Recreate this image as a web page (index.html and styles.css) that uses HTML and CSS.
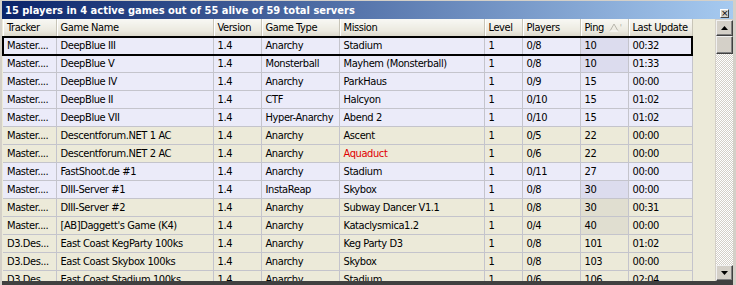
FILE: index.html
```html
<!DOCTYPE html>
<html>
<head>
<meta charset="utf-8">
<link rel="stylesheet" href="styles.css">
</head>
<body>
<div class="window">
  <div class="titlebar">
    <span class="title">15 players in 4 active games out of 55 alive of 59 total servers</span>
    <span class="close">×</span>
  </div>
  <div class="content">
    <div class="list">
      <table class="grid">
        <colgroup>
          <col class="c-tracker"><col class="c-name"><col class="c-version"><col class="c-type"><col class="c-mission"><col class="c-level"><col class="c-players"><col class="c-ping"><col class="c-update">
        </colgroup>
        <thead>
          <tr>
            <th>Tracker</th><th>Game Name</th><th>Version</th><th>Game Type</th><th>Mission</th><th>Level</th><th>Players</th>
            <th>Ping <svg class="sort" width="11" height="9" viewBox="0 0 11 9"><path d="M1 8 L5 1 L9 8" fill="none" stroke="#b8b6ac" stroke-width="1"/><path d="M1 8 H9" stroke="#ffffff" stroke-width="1"/></svg><span class="dot">'</span></th>
            <th>Last Update</th>
          </tr>
        </thead>
        <tbody>
          <tr class="blue selected"><td>Master....</td><td>DeepBlue III</td><td>1.4</td><td>Anarchy</td><td>Stadium</td><td>1</td><td>0/8</td><td class="hl">10</td><td>00:32</td></tr>
          <tr class="blue"><td>Master....</td><td>DeepBlue V</td><td>1.4</td><td>Monsterball</td><td>Mayhem (Monsterball)</td><td>1</td><td>0/8</td><td class="hl">10</td><td>01:33</td></tr>
          <tr class="blue"><td>Master....</td><td>DeepBlue IV</td><td>1.4</td><td>Anarchy</td><td>ParkHaus</td><td>1</td><td>0/9</td><td>15</td><td>00:00</td></tr>
          <tr class="blue"><td>Master....</td><td>DeepBlue II</td><td>1.4</td><td>CTF</td><td>Halcyon</td><td>1</td><td>0/10</td><td>15</td><td>01:02</td></tr>
          <tr class="blue"><td>Master....</td><td>DeepBlue VII</td><td>1.4</td><td>Hyper-Anarchy</td><td>Abend 2</td><td>1</td><td>0/10</td><td>15</td><td>01:02</td></tr>
          <tr class="tan"><td>Master....</td><td>Descentforum.NET 1 AC</td><td>1.4</td><td>Anarchy</td><td>Ascent</td><td>1</td><td>0/5</td><td>22</td><td>00:00</td></tr>
          <tr class="tan"><td>Master....</td><td>Descentforum.NET 2 AC</td><td>1.4</td><td>Anarchy</td><td class="red">Aquaduct</td><td>1</td><td>0/6</td><td>22</td><td>00:00</td></tr>
          <tr class="blue"><td>Master....</td><td>FastShoot.de #1</td><td>1.4</td><td>Anarchy</td><td>Stadium</td><td>1</td><td>0/11</td><td>27</td><td>00:00</td></tr>
          <tr class="blue"><td>Master....</td><td>DIII-Server #1</td><td>1.4</td><td>InstaReap</td><td>Skybox</td><td>1</td><td>0/8</td><td class="hl">30</td><td>00:00</td></tr>
          <tr class="tan"><td>Master....</td><td>DIII-Server #2</td><td>1.4</td><td>Anarchy</td><td>Subway Dancer V1.1</td><td>1</td><td>0/8</td><td class="hl">30</td><td>00:31</td></tr>
          <tr class="tan"><td>Master....</td><td>[AB]Daggett's Game (K4)</td><td>1.4</td><td>Anarchy</td><td>Kataclysmica1.2</td><td>1</td><td>0/4</td><td class="hl">40</td><td>00:00</td></tr>
          <tr class="tan"><td>D3.Des...</td><td>East Coast KegParty 100ks</td><td>1.4</td><td>Anarchy</td><td>Keg Party D3</td><td>1</td><td>0/8</td><td>101</td><td>01:02</td></tr>
          <tr class="tan"><td>D3.Des...</td><td>East Coast Skybox 100ks</td><td>1.4</td><td>Anarchy</td><td>Skybox</td><td>1</td><td>0/8</td><td>103</td><td>00:00</td></tr>
          <tr class="tan"><td>D3.Des...</td><td>East Coast Stadium 100ks</td><td>1.4</td><td>Anarchy</td><td>Stadium</td><td>1</td><td>0/6</td><td>106</td><td>02:04</td></tr>
        </tbody>
      </table>
    </div>
    <div class="scrollbar">
      <div class="sbtn"><svg width="7" height="4" viewBox="0 0 7 4"><path d="M3.5 0 L7 4 H0 Z" fill="#000"/></svg></div>
      <div class="thumb"></div>
      <div class="track"></div>
      <div class="sbtn"><svg width="7" height="4" viewBox="0 0 7 4"><path d="M0 0 H7 L3.5 4 Z" fill="#000"/></svg></div>
    </div>
  </div>
</div>
</body>
</html>
```

FILE: styles.css
```css
html, body {
  margin: 0;
  padding: 0;
  background: #d4d0c8;
}
.window {
  width: 736px;
  height: 285px;
  box-sizing: border-box;
  padding: 1px 3px 0 2px;
  display: flex;
  flex-direction: column;
  background: #d4d0c8;
  overflow: hidden;
}
.titlebar {
  height: 18px;
  flex: none;
  display: flex;
  align-items: center;
  justify-content: space-between;
  padding: 0 0 0 3px;
  background: linear-gradient(to right, #0a246a, #a6caf0);
}
.title {
  color: #fff;
  font-family: "DejaVu Sans Condensed", "DejaVu Sans", sans-serif;
  font-stretch: condensed;
  font-weight: bold;
  font-size: 11px;
}
.close {
  width: 9px;
  height: 9px;
  margin: 6px 4px 0 0;
  box-sizing: border-box;
  border: 1px solid;
  border-color: #fff #404040 #404040 #fff;
  background: #d4d0c8;
  font-family: "DejaVu Sans", sans-serif;
  font-size: 9px;
  line-height: 6px;
  text-align: center;
  color: #000;
}
.content {
  flex: 1;
  display: flex;
  min-height: 0;
  border-bottom: 4px solid #404040;
  box-shadow: 0 1px 0 #808080;
}
.list {
  flex: 1;
  background: #ecead9;
  padding-left: 1px;
  overflow: hidden;
}
.grid {
  border-collapse: collapse;
  table-layout: fixed;
  width: 689px;
  font-family: "DejaVu Sans Condensed", "DejaVu Sans", sans-serif;
  font-stretch: condensed;
  font-size: 11px;
  letter-spacing: -0.4px;
  color: #000;
}
.c-tracker { width: 53px; }
.c-name { width: 157px; }
.c-version { width: 48px; }
.c-type { width: 78px; }
.c-mission { width: 145px; }
.c-level { width: 38px; }
.c-players { width: 58px; }
.c-ping { width: 48px; }
.c-update { width: 64px; }
.grid th {
  height: 17px;
  padding: 0 0 0 4px;
  text-align: left;
  font-weight: normal;
  white-space: nowrap;
  overflow: hidden;
  background: linear-gradient(#f8f8f4, #ebe9df 70%, #dcd9cc);
  border-right: 1px solid #c8c5b8;
  box-shadow: inset 1px 0 0 #ffffff;
  border-bottom: 1px solid #d0cdc0;
}
.sort { vertical-align: -1px; margin-left: 2px; }
.dot { color: #b0aea4; font-size: 9px; }
.grid td {
  height: 17px;
  padding: 0 0 0 4px;
  white-space: nowrap;
  overflow: hidden;
  border-right: 1px solid #c4c4cc;
  border-bottom: 1px solid #c4c4cc;
}
.blue td { background: #ebebf9; }
.tan td { background: #ecead9; }
.blue td.hl { background: #dcdcee; }
.tan td.hl { background: #e0ded0; }
.red { color: #e00000; }
.selected {
  outline: 2px solid #000;
  outline-offset: -1px;
}
.scrollbar {
  width: 17px;
  flex: none;
  display: flex;
  flex-direction: column;
  margin-left: 1px;
  margin-top: 1px;
}
.sbtn, .thumb {
  height: 16px;
  flex: none;
  box-sizing: border-box;
  background: #d4d0c8;
  border: 1px solid;
  border-color: #f0f0f0 #404040 #404040 #f0f0f0;
  box-shadow: inset -1px -1px 0 #808080;
  display: flex;
  align-items: center;
  justify-content: center;
}
.thumb { height: 18px; }
.track {
  flex: 1;
  background: repeating-conic-gradient(#d4d0c8 0 25%, #ffffff 0 50%) 0 0 / 2px 2px;
}
```
